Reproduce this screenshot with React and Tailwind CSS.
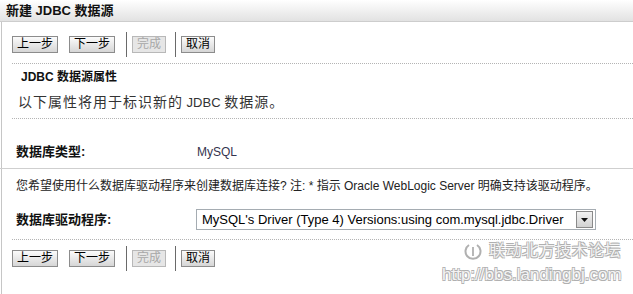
const FONT = "font-['Liberation_Sans','Noto_Sans_CJK_SC',sans-serif]"

function Btn({ children, disabled }) {
  return (
    <button
      disabled={disabled}
      className={
        disabled
          ? "h-[17px] px-[4px] text-[12px] leading-[15px] border border-[#b8b8b8] bg-[#e6e6e6] text-[#a8a8a8]"
          : "h-[17px] px-[4px] text-[12px] leading-[15px] border border-[#8c8c8c] bg-linear-to-b from-[#fbfbfb] to-[#d6d6d6] text-black"
      }
    >
      {children}
    </button>
  )
}

function Sep() {
  return <div className="w-px h-[25px] bg-[#6a6a6a]" />
}

function ButtonRow() {
  return (
    <div className="flex items-center h-[25px] pl-[10px]">
      <Btn>上一步</Btn>
      <div className="w-[11px]" />
      <Btn>下一步</Btn>
      <div className="w-[11px]" />
      <Sep />
      <div className="w-[5px]" />
      <Btn disabled>完成</Btn>
      <div className="w-[9px]" />
      <Sep />
      <div className="w-[5px]" />
      <Btn>取消</Btn>
    </div>
  )
}

function Dotted() {
  return <div className="ml-[10px] border-t border-dotted border-[#b4b4b4]" />
}

const SHADOW = "[text-shadow:0.7px_0.7px_0_#b0b0b0,-0.7px_-0.7px_0_#b0b0b0,0.7px_-0.7px_0_#b0b0b0,-0.7px_0.7px_0_#b0b0b0]"

export default function App() {
  return (
    <div className={`w-[633px] h-[294px] bg-white relative overflow-hidden text-[12px] text-[#222] ${FONT}`}>
      <div className="h-[22px] bg-linear-to-b from-white to-[#e2e2e2] border-b border-[#cdcdcd] pl-[6px] font-bold text-[13px] leading-[21px] text-[#111]">
        新建 JDBC 数据源
      </div>

      <div className="ml-px border-l border-[#c6c6c6] h-[272px]">
        <div className="h-[10px]" />
        <ButtonRow />
        <div className="h-[6px]" />
        <Dotted />

        <div className="mt-[5px] pl-[19px] font-bold text-[12px] leading-[16px] text-[#111]">JDBC 数据源属性</div>
        <div className="mt-[9px] pl-[16px] leading-[16px] text-[#333] whitespace-nowrap">
          <span className="text-[14px] tracking-[1px]">以下属性将用于标识新的</span>
          <span className="text-[13px]"> JDBC </span>
          <span className="text-[14px] tracking-[1px]">数据源。</span>
        </div>
        <div className="mt-[7px]">
          <Dotted />
        </div>

        <div className="mt-[25px] pl-[14px] flex items-center leading-[16px]">
          <div className="w-[181px] font-bold text-[13px] text-[#111]">数据库类型:</div>
          <div className="text-[#34344e]">MySQL</div>
        </div>

        <div className="mt-[8px] -ml-[2px] border-t border-[#cfcfcf]" />

        <div className="mt-[9px] pl-[14px] leading-[16px] text-[#222]">
          您希望使用什么数据库驱动程序来创建数据库连接? 注: * 指示 Oracle WebLogic Server 明确支持该驱动程序。
        </div>

        <div className="mt-[15px] pl-[14px] flex items-center h-[21px]">
          <div className="w-[180px] font-bold text-[13px] text-[#111]">数据库驱动程序:</div>
          <div className="w-[400px] h-[21px] border border-[#a5acb2] bg-white flex items-center justify-between">
            <span className="pl-[5px] text-[13px] text-black whitespace-nowrap">
              MySQL's Driver (Type 4) Versions:using com.mysql.jdbc.Driver
            </span>
            <span className="w-[17px] h-[17px] mr-[2px] border border-[#8a8a8a] bg-linear-to-b from-[#f2f2f2] to-[#d2d2d2] flex items-center justify-center">
              <svg width="7" height="4" viewBox="0 0 7 4">
                <path d="M0 0 H7 L3.5 4 Z" fill="#111" />
              </svg>
            </span>
          </div>
        </div>

        <div className="mt-[9px]">
          <Dotted />
        </div>
        <div className="h-[6px]" />
        <ButtonRow />
      </div>

      {/* watermark */}
      <div className={`absolute left-[463px] top-[241px] flex items-center gap-[6px] text-[#f4f4f4] ${SHADOW}`}>
        <svg width="20" height="20" viewBox="0 0 20 20">
          <path d="M6 4 A7.5 7.5 0 1 0 14 4" fill="none" stroke="#b0b0b0" strokeWidth="2" />
          <path d="M10 6 V15" stroke="#b0b0b0" strokeWidth="1.8" />
        </svg>
        <span className="text-[16px] leading-[20px] tracking-[0.5px]">联动北方技术论坛</span>
      </div>
      <div className={`absolute left-[442px] top-[264px] text-[17px] leading-[22px] text-[#f4f4f4] font-['Liberation_Sans',sans-serif] ${SHADOW}`}>
        http://bbs.landingbj.com
      </div>
    </div>
  )
}
